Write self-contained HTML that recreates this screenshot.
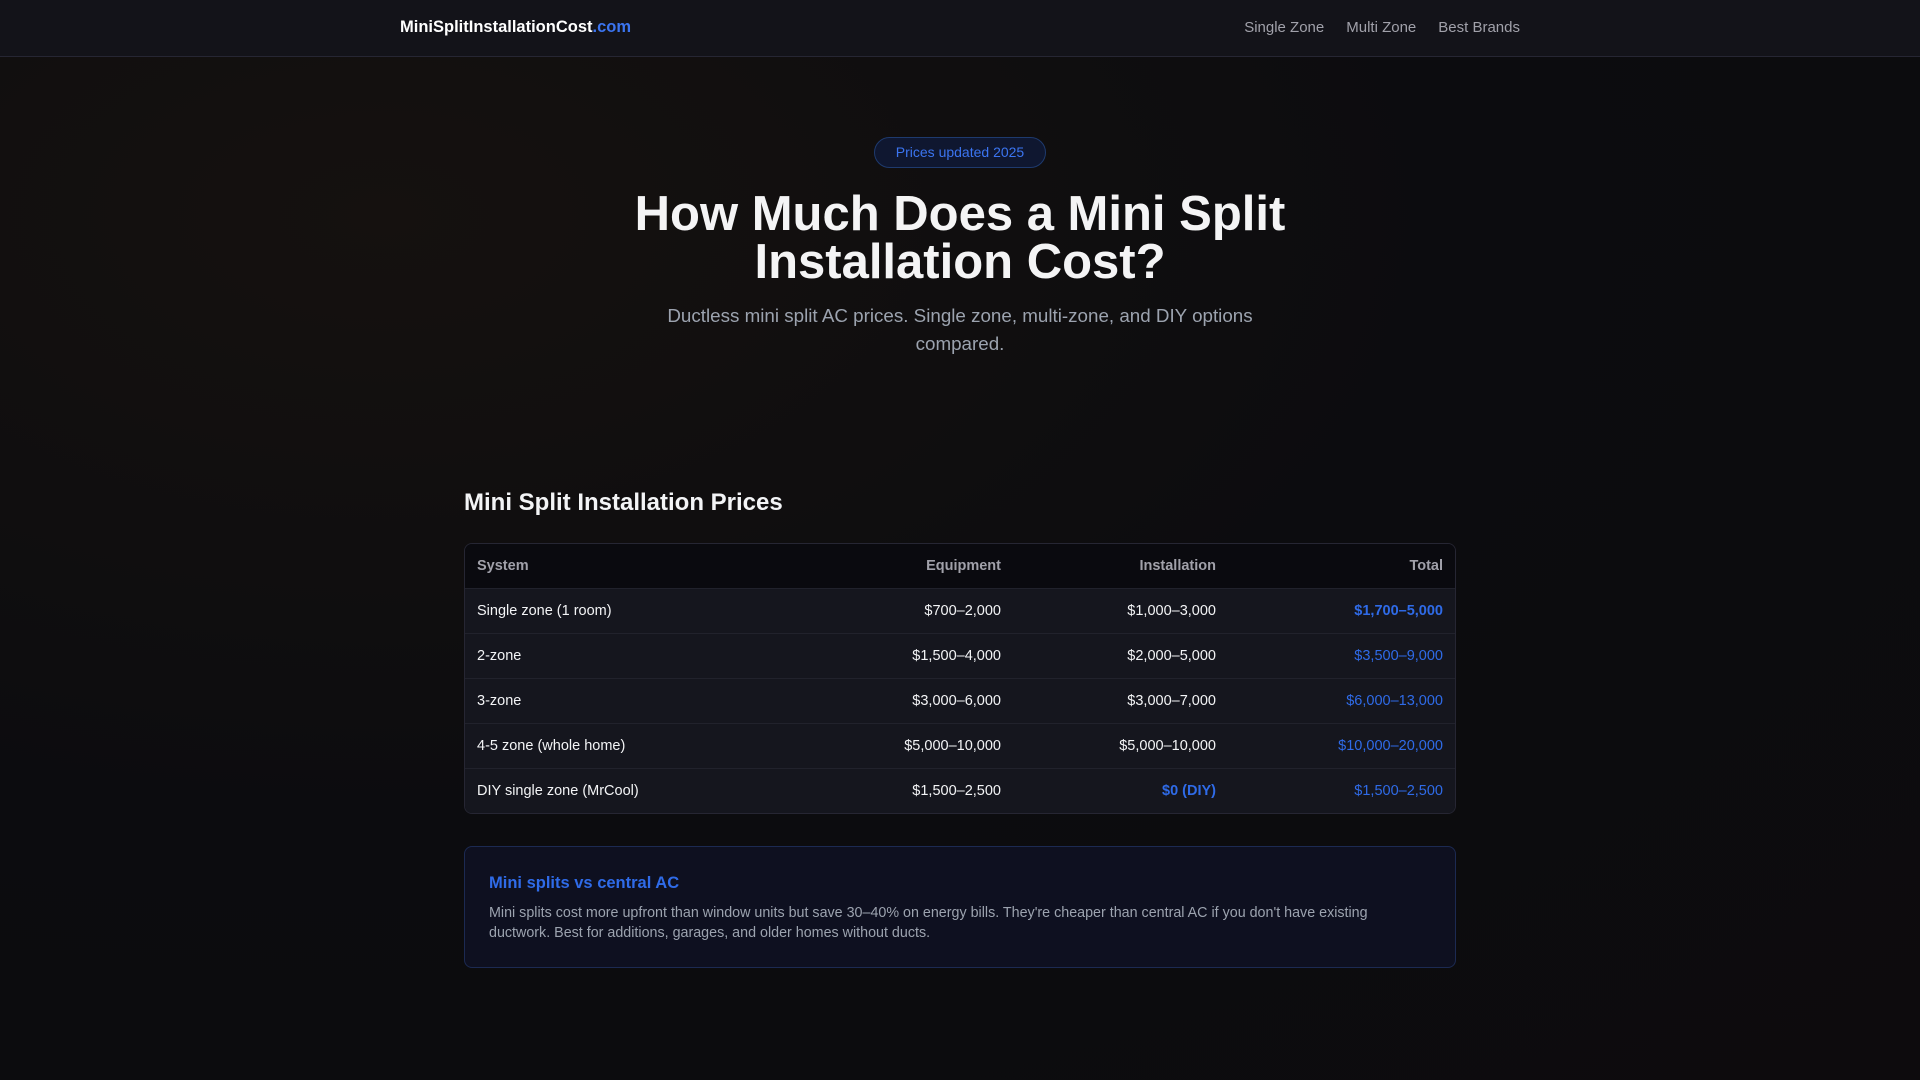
<!DOCTYPE html>
<html><head><meta charset="utf-8"><style>
*{margin:0;padding:0;box-sizing:border-box}
body{width:1920px;height:1080px;overflow:hidden;background:radial-gradient(ellipse at 20% 20%,#15110f 0%,#0c0c0f 50%,#0d0b0d 100%);font-family:"Liberation Sans",sans-serif;color:#f3f4f6}
header{height:57px;background:#131319;border-bottom:1px solid #262633;position:relative}
.logo{position:absolute;left:400px;top:18px;font-size:16.5px;font-weight:bold;color:#fff}
.logo span{color:#3b74f0}
nav{position:absolute;right:400px;top:19px;font-size:15px;color:#a1a1aa}
nav a{margin-left:22px}
.badge{position:absolute;left:874px;top:137px;width:172px;height:31px;border:1px solid #1e3a6e;background:#0f1730;border-radius:16px;color:#3b74f0;font-size:14px;text-align:center;line-height:29px}
h1{position:absolute;left:0;width:1920px;top:190px;text-align:center;font-size:49px;line-height:48px;font-weight:bold;color:#f4f4f5}
.sub{position:absolute;left:640px;width:640px;top:302px;text-align:center;font-size:18.8px;line-height:28px;color:#9ca3af}
h2{position:absolute;left:464px;top:489px;font-size:24px;font-weight:bold}
table{position:absolute;left:464px;top:543px;width:992px;border-collapse:separate;border-spacing:0;border:1px solid #262633;border-radius:8px;overflow:hidden;font-size:14.5px;table-layout:fixed}
th{height:44px;background:#0a0a0f;color:#a1a1aa;font-weight:bold;text-align:right;padding:0 12px}
td{height:45px;background:#15161e;border-top:1px solid #21222c;text-align:right;padding:0 12px;color:#f3f4f6}
th:first-child,td:first-child{text-align:left}
.b{color:#2f6be8}.bb{color:#2f6be8;font-weight:bold}
.box{position:absolute;left:464px;top:846px;width:992px;height:122px;border:1px solid #1c2a52;border-radius:8px;background:#0e1020;padding:27px 24px}
.box h3{font-size:16.5px;color:#2f6be8;margin-bottom:10px}
.box p{font-size:14.3px;line-height:20px;color:#9ca3af}
</style></head><body>
<header><div class="logo">MiniSplitInstallationCost<span>.com</span></div>
<nav><a>Single Zone</a><a>Multi Zone</a><a>Best Brands</a></nav></header>
<div class="badge">Prices updated 2025</div>
<h1>How Much Does a Mini Split<br>Installation Cost?</h1>
<div class="sub">Ductless mini split AC prices. Single zone, multi-zone, and DIY options compared.</div>
<h2>Mini Split Installation Prices</h2>
<table>
<tr><th style="width:372px">System</th><th style="width:176px">Equipment</th><th style="width:215px">Installation</th><th style="width:227px">Total</th></tr>
<tr><td>Single zone (1 room)</td><td>$700–2,000</td><td>$1,000–3,000</td><td class="bb">$1,700–5,000</td></tr>
<tr><td>2-zone</td><td>$1,500–4,000</td><td>$2,000–5,000</td><td class="b">$3,500–9,000</td></tr>
<tr><td>3-zone</td><td>$3,000–6,000</td><td>$3,000–7,000</td><td class="b">$6,000–13,000</td></tr>
<tr><td>4-5 zone (whole home)</td><td>$5,000–10,000</td><td>$5,000–10,000</td><td class="b">$10,000–20,000</td></tr>
<tr><td>DIY single zone (MrCool)</td><td>$1,500–2,500</td><td class="bb">$0 (DIY)</td><td class="b">$1,500–2,500</td></tr>
</table>
<div class="box"><h3>Mini splits vs central AC</h3><p>Mini splits cost more upfront than window units but save 30–40% on energy bills. They're cheaper than central AC if you don't have existing ductwork. Best for additions, garages, and older homes without ducts.</p></div>
</body></html>
